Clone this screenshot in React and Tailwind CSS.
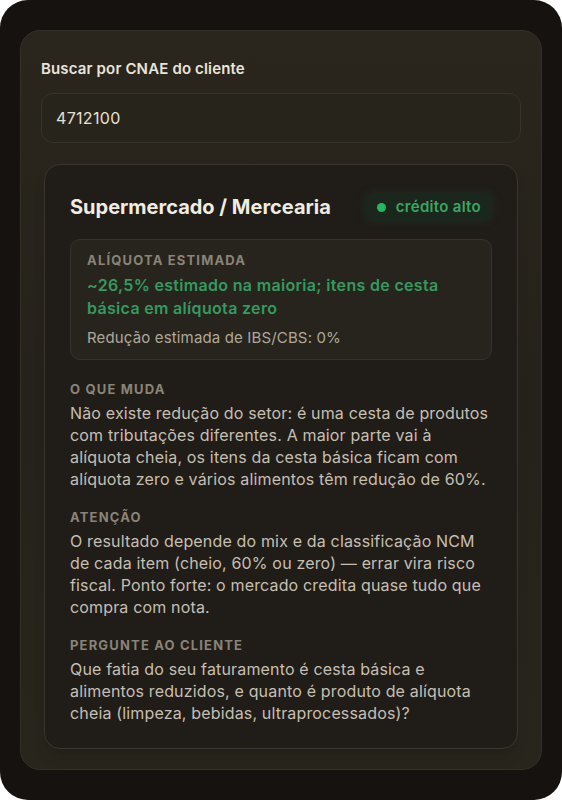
import React from 'react';

const sections = [
    {
        label: 'O que muda',
        text: 'Não existe redução do setor: é uma cesta de produtos com tributações diferentes. A maior parte vai à alíquota cheia, os itens da cesta básica ficam com alíquota zero e vários alimentos têm redução de 60%.',
    },
    {
        label: 'Atenção',
        text: 'O resultado depende do mix e da classificação NCM de cada item (cheio, 60% ou zero) — errar vira risco fiscal. Ponto forte: o mercado credita quase tudo que compra com nota.',
    },
    {
        label: 'Pergunte ao cliente',
        text: 'Que fatia do seu faturamento é cesta básica e alimentos reduzidos, e quanto é produto de alíquota cheia (limpeza, bebidas, ultraprocessados)?',
    },
];

function App() {
    return (
        <div className="w-[562px] h-[800px] bg-white" style={{ fontFamily: 'Inter, "Noto Sans", sans-serif' }}>
            <div className="w-full h-full rounded-[28px] bg-[#15120f] overflow-hidden px-5 pt-[30px]">
                <div className="h-[740px] rounded-[20px] border border-[#35312a] bg-gradient-to-b from-[#2a261d] via-[#25221b] to-[#28251c] px-5 pt-[28px]">
                    <label className="block text-[15px] leading-5 font-semibold tracking-[0.01em] text-[#e9e4d9]">Buscar por CNAE do cliente</label>
                    <div className="mt-[14px] h-[50px] rounded-xl border border-[#37332b] bg-[#27241c] px-[14px] flex items-center text-[16px] tracking-[0.02em] text-[#e6e0d4]">
                        4712100
                    </div>

                    <div className="mt-[21px] mx-[3px] rounded-2xl border border-[#3a362d] bg-[#201d18] px-[25px] pt-[28px] pb-[24px] shadow-lg">
                        <div className="flex items-center justify-between">
                            <h2 className="text-[20px] leading-[26px] font-bold text-[#f1ece2]">Supermercado / Mercearia</h2>
                            <span className="flex items-center gap-[10px] h-[28px] rounded-lg bg-[#1b261c] pl-[11px] pr-[11px] text-[15px] font-semibold tracking-[0.02em] text-[#38a862] shadow-[0_0_8px_rgba(30,90,50,0.3)]">
                                <span className="w-[9px] h-[9px] rounded-full bg-[#22b860]"></span>
                                crédito alto
                            </span>
                        </div>

                        <div className="mt-[18px] rounded-[10px] border border-[#37332a] bg-[#27241d] pl-4 pr-4 pt-[11px] pb-[11px]">
                            <div className="text-[13px] leading-[18px] font-bold tracking-[0.09em] uppercase text-[#8a8377]">Alíquota estimada</div>
                            <div className="mt-[5px] text-[16px] leading-[23px] font-semibold tracking-[0.02em] text-[#349a5f]">
                                ~26,5% estimado na maioria; itens de cesta básica em alíquota zero
                            </div>
                            <div className="mt-[8px] text-[15px] leading-5 tracking-[0.01em] text-[#afa89b]">Redução estimada de IBS/CBS: 0%</div>
                        </div>

                        {sections.map((s, i) => (
                            <div key={i} className={i === 0 ? 'mt-[20px]' : 'mt-[18px]'}>
                                <div className="text-[13px] leading-[18px] font-bold tracking-[0.09em] uppercase text-[#8a8377]">{s.label}</div>
                                <p className="mt-1 text-[16px] leading-[22px] tracking-[0.01em] text-[#c6bfb2]">{s.text}</p>
                            </div>
                        ))}
                    </div>
                </div>
            </div>
        </div>
    );
}

export default App;
